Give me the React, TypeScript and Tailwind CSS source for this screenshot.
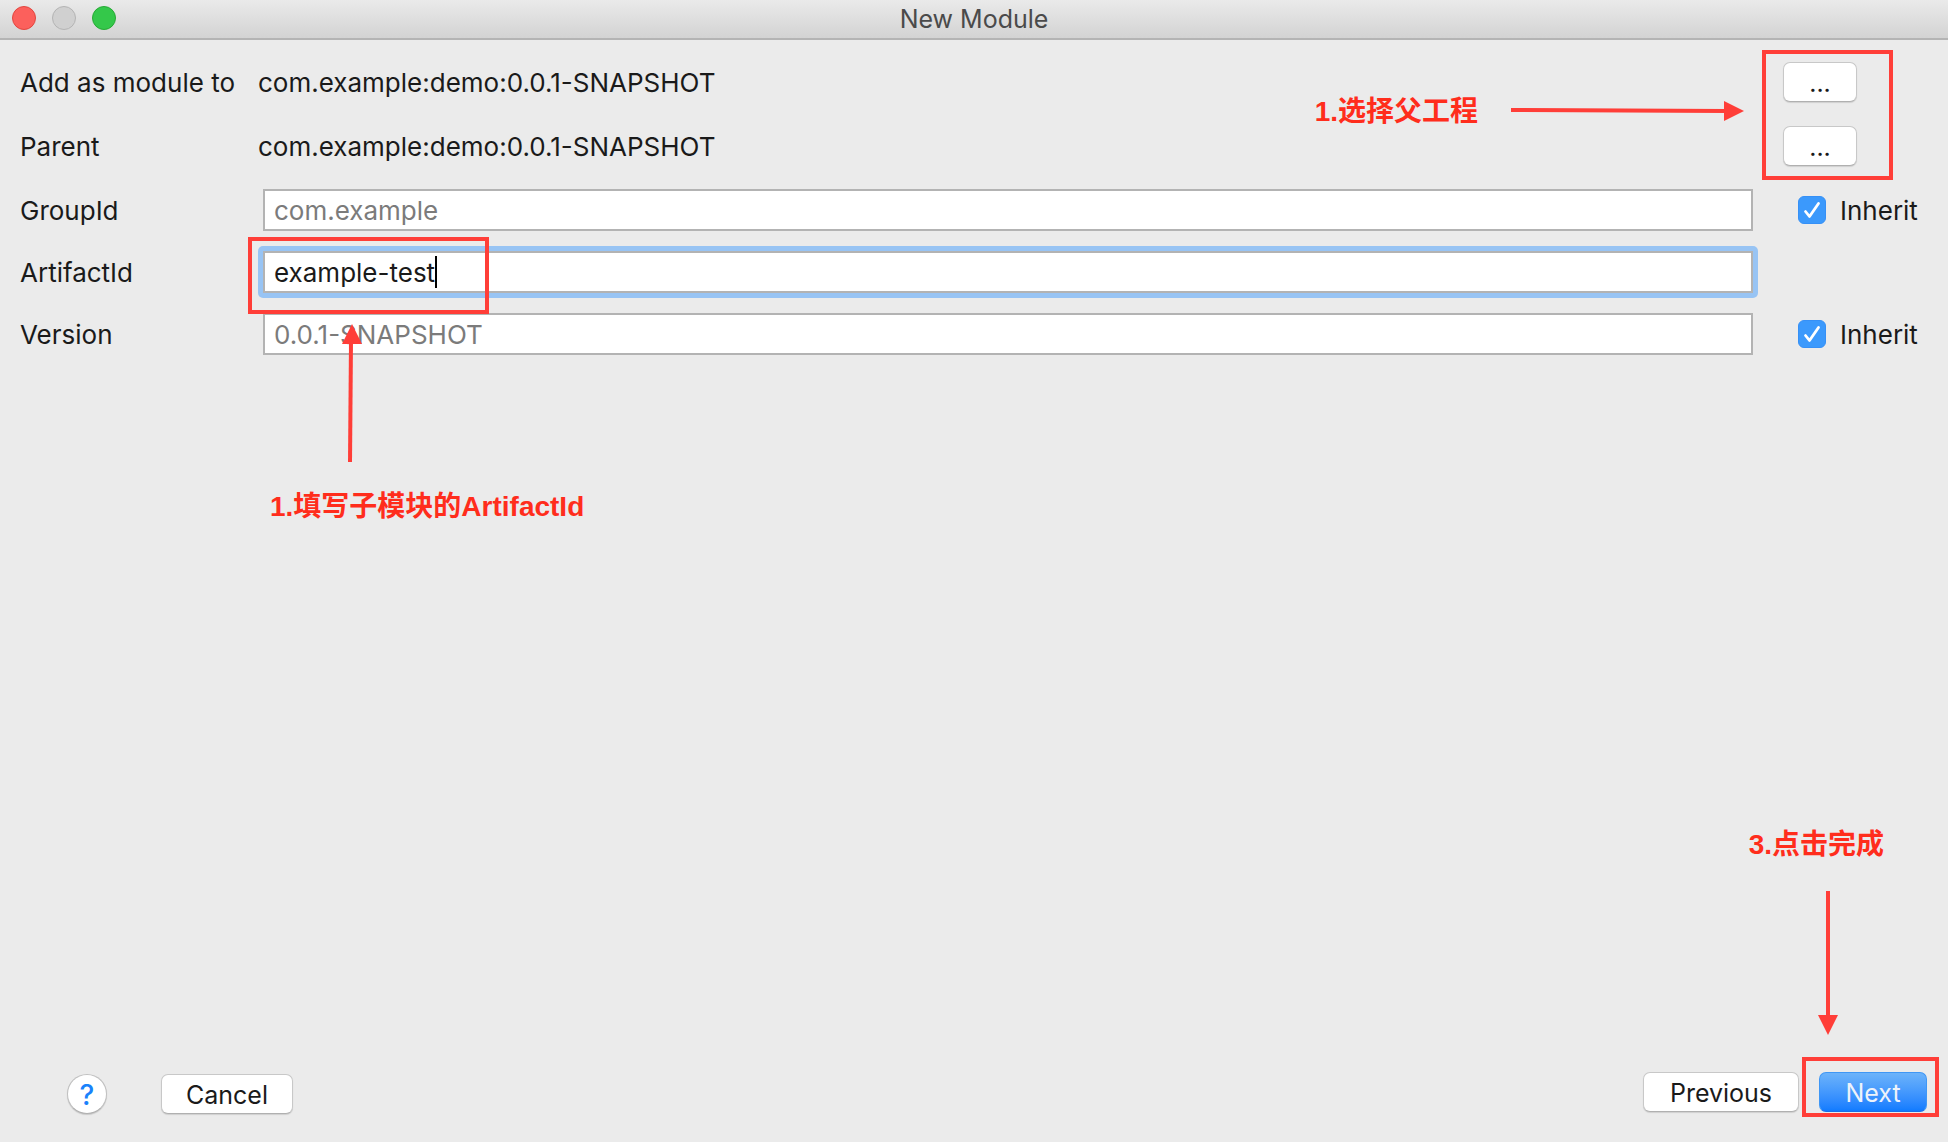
import React from 'react';

const PARENT = 'com.example:demo:0.0.1-SNAPSHOT';

const buttonBase =
  'flex h-10 items-center justify-center rounded-[7px] border pt-0.5 text-[25px] leading-8';
const plainButton =
  'border-[#c8c8c8] border-b-[#b0b0b0] bg-white text-[#1a1a1a] shadow-[0_1px_1px_rgba(0,0,0,0.12)]';

function TitleBar() {
  return (
    <header className="relative flex h-10 items-center justify-center border-b-2 border-[#b4b4b4] bg-linear-to-b from-[#eaeaea] to-[#d3d3d3]">
      <div className="absolute left-3 top-1.5 flex gap-4">
        <button aria-label="Close" className="size-6 rounded-full border border-[#e2463f] bg-[#fc605c]" />
        <button aria-label="Minimize" disabled className="size-6 rounded-full border border-[#b4b4b4] bg-[#d0d0d0]" />
        <button aria-label="Zoom" className="size-6 rounded-full border border-[#27aa35] bg-[#34c84a]" />
      </div>
      <h1 className="text-[25px] leading-8 text-[#4a4a4a]">New Module</h1>
    </header>
  );
}

function ModuleRow({ label }: { label: string }) {
  return (
    <div className="flex h-10 items-center">
      <span className="w-[238px] shrink-0 pt-0.5">{label}</span>
      <span className="flex-1 pt-0.5">{PARENT}</span>
      <div className="w-[165px] shrink-0">
        <button aria-label={`Choose: ${label}`} className={`${buttonBase} ${plainButton} w-[74px]`}>
          ...
        </button>
      </div>
    </div>
  );
}

function Inherit({ id }: { id: string }) {
  return (
    <label htmlFor={id} className="flex items-center gap-3.5">
      <span className="relative flex size-7">
        <input
          id={id}
          type="checkbox"
          defaultChecked
          className="size-7 appearance-none rounded-md border border-[#3690f6] bg-[#3b99fc]"
        />
        <svg viewBox="0 0 28 28" fill="none" className="pointer-events-none absolute inset-0 size-7">
          <path d="M7.5 15.5 11.5 20.5 20.5 7.5" stroke="#fff" strokeWidth="2.8" strokeLinecap="round" strokeLinejoin="round" />
        </svg>
      </span>
      <span className="pt-0.5">Inherit</span>
    </label>
  );
}

function FieldRow({
  label,
  value,
  inherited = false,
  focused = false,
}: {
  label: string;
  value: string;
  inherited?: boolean;
  focused?: boolean;
}) {
  return (
    <div className="flex h-[42px] items-center">
      <label htmlFor={label} className="w-[243px] shrink-0 pt-0.5">
        {label}
      </label>
      <div className="relative flex-1">
        {focused && <span className="absolute -inset-[5px] rounded-[5px] bg-[#98c4f4]" />}
        <input
          id={label}
          type="text"
          defaultValue={value}
          readOnly={inherited}
          className={`relative block h-[42px] w-full border-2 border-[#b3b3b3] bg-white px-[9px] caret-transparent outline-none ${
            focused ? 'text-[#1a1a1a]' : 'text-[#7b7b7b]'
          }`}
        />
        {focused && <span className="absolute left-[172px] top-[5px] h-8 w-0.5 bg-black" />}
      </div>
      <div className="w-[195px] shrink-0 pl-[45px]">{inherited && <Inherit id={`${label}-inherit`} />}</div>
    </div>
  );
}

const noteText =
  'absolute whitespace-nowrap font-["Liberation_Sans","Noto_Sans_CJK_SC",sans-serif] text-[28px] font-bold leading-9 text-[#ff2d1c]';
const frame = 'absolute border-4 border-[#ff3e38]';

function Annotations() {
  return (
    <div className="pointer-events-none absolute inset-0">
      <div className={`${frame} left-[248px] top-[237px] h-[77px] w-[241px]`} />
      <svg width="24" height="140" viewBox="0 0 24 140" className="absolute left-[340px] top-[323px]" fill="#ff3e38">
        <path d="M11 18 10 139" stroke="#ff3e38" strokeWidth="4" />
        <path d="M12 1 22 21H2Z" />
      </svg>
      <p className={`${noteText} left-[270px] top-[489px]`}>1.填写子模块的ArtifactId</p>

      <p className={`${noteText} right-[470px] top-[94px]`}>1.选择父工程</p>
      <svg width="234" height="24" viewBox="0 0 234 24" className="absolute right-[204px] top-[99px]" fill="#ff3e38">
        <path d="M1 11 216 12" stroke="#ff3e38" strokeWidth="4" />
        <path d="M234 12 214 2V22Z" />
      </svg>
      <div className={`${frame} right-[55px] top-[50px] h-[130px] w-[131px]`} />

      <p className={`${noteText} bottom-[279px] right-[64px]`}>3.点击完成</p>
      <svg width="24" height="146" viewBox="0 0 24 146" className="absolute bottom-[106px] right-[108px]" fill="#ff3e38">
        <path d="M12 1V128" stroke="#ff3e38" strokeWidth="4" />
        <path d="M12 145 2 125H22Z" />
      </svg>
      <div className={`${frame} bottom-[25px] right-[9px] h-[60px] w-[137px]`} />
    </div>
  );
}

export default function App() {
  return (
    <div className="relative flex min-h-screen flex-col bg-[#ebebeb] font-['Inter',sans-serif] text-[26px] leading-8 text-[#1a1a1a]">
      <TitleBar />
      <main className="flex flex-1 flex-col pl-5 pt-[22px]">
        <div className="flex flex-col gap-6">
          <ModuleRow label="Add as module to" />
          <ModuleRow label="Parent" />
        </div>
        <div className="mt-[23px] flex flex-col gap-5">
          <FieldRow label="GroupId" value="com.example" inherited />
          <FieldRow label="ArtifactId" value="example-test" focused />
          <FieldRow label="Version" value="0.0.1-SNAPSHOT" inherited />
        </div>
      </main>
      <footer className="flex justify-between pb-7 pl-[67px] pr-[21px]">
        <div className="mt-0.5 flex gap-[54px]">
          <button
            aria-label="Help"
            className="flex size-10 items-center justify-center rounded-full border border-[#c0c0c0] border-b-[#b0b0b0] bg-white pt-0.5 text-[28px] font-medium text-[#1a82fb] shadow-[0_1px_1px_rgba(0,0,0,0.15)]"
          >
            ?
          </button>
          <button className={`${buttonBase} ${plainButton} w-[132px]`}>Cancel</button>
        </div>
        <div className="flex gap-5">
          <button className={`${buttonBase} ${plainButton} w-[156px]`}>Previous</button>
          <button
            className={`${buttonBase} w-[108px] border-[#3f97f5] border-b-[#1a6fe8] bg-linear-to-b from-[#6cb3fa] to-[#0f7bff] text-[#eef3fa]`}
          >
            Next
          </button>
        </div>
      </footer>
      <Annotations />
    </div>
  );
}
